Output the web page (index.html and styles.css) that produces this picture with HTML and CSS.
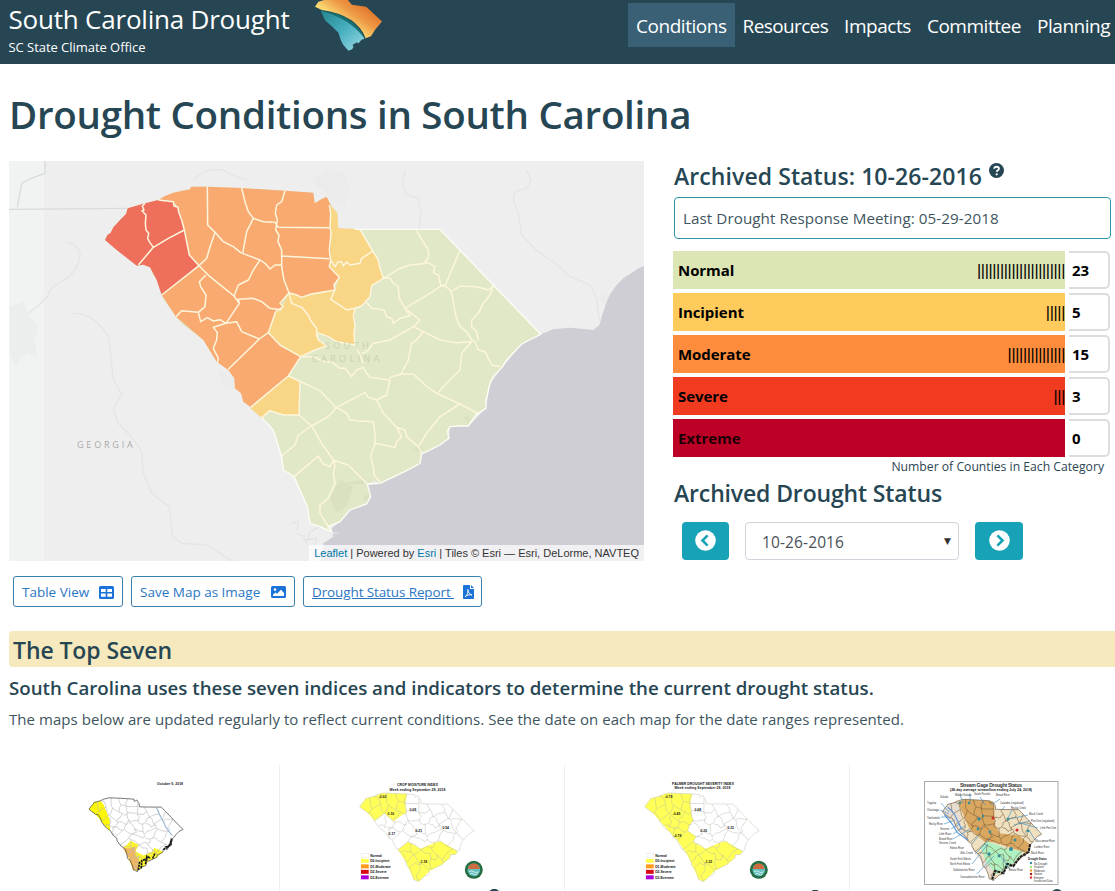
FILE: index.html
```html
<!DOCTYPE html>
<html lang="en">
<head>
<meta charset="utf-8">
<title>South Carolina Drought</title>
<link rel="stylesheet" href="styles.css">
</head>
<body>
<svg class="defs" width="0" height="0">
  <defs>
    <path id="state" d="M45 210L52 195L62 188L70 172L90 150L108 132L113 115L165 100L205 90L225 78L250 68L280 60L300 58L303 50L352 50L455 54L585 62L670 68L674 100L694 88L710 80L722 105L735 118L742 130L745 175L810 178L1050 180L1110 240L1210 348L1352 493L1295 522L1250 570L1238 590L1210 620L1200 640L1188 690L1188 715L1160 732L1150 745L1135 768L1110 768L1080 770L1072 785L1077 805L1050 825L1020 842L995 852L990 880L950 902L910 920L870 940L855 932L832 942L842 980L830 1002L780 1020L765 1040L750 1055L715 1070L720 1085L690 1070L660 1060L652 1010L635 970L612 920L592 912L580 900L575 860L565 825L550 780L540 765L515 743L482 718L482 708L460 695L453 670L435 655L433 625L415 600L380 575L365 550L340 510L300 480L275 462L258 440L240 415L225 395L215 375L206 345L200 330L188 315L180 292L160 284L140 287L125 270L80 240Z"/>
    <path id="counties" fill="none" d="M165 100L157 108L162 120L156 122L168 135L166 160L168 180L176 190L173 205L178 215L190 232M145 285L190 232L235 205L283 180M205 90L250 95L252 108L264 112L266 126L275 150L283 180L290 215L298 255L327 287L215 375M352 50L353 165L375 187L362 225L350 265L327 287M375 187L400 215L430 230L455 250M455 54L465 95L475 125L490 145L470 185L458 250M490 145L520 155L555 157L565 172M585 62L575 95L560 105L556 130L562 150L557 180L567 195L564 215L575 240L575 290L582 330L597 368M565 172L720 173M575 258L718 266M458 250L510 270L525 280L540 297L555 285L573 285M510 270L490 300L475 330L445 345L432 378M327 287L360 320L400 352L432 378L448 400L445 388L490 385L515 395L540 415L575 420M348 315L328 335L332 350L348 375L345 410L325 427M258 440L275 422L325 427L332 455L352 443L370 453L390 449L408 460M448 400L408 460L370 472L382 488L380 510L370 535L385 565L383 578M408 460L440 455L455 485L508 507M557 425L535 488L508 507L415 598M535 488L570 525L632 560L595 618L482 712M557 425L580 410L570 400L597 368L605 400L635 412L655 435L662 452L680 475L680 500M597 368L620 375L635 382L660 373L735 360L732 345L748 322L718 290L722 270M735 360L722 388L770 420L795 415M718 105L722 130L720 170L723 190L718 240L722 270L735 290L745 275L755 275L760 288L770 276L780 285L810 280L815 265L848 243M810 178L848 243L865 270L870 295L880 325L845 347L840 380L815 408L795 415L790 440L795 465L792 490L795 525L740 515L715 500L680 487L685 510L710 528L675 540L632 560M795 525L810 555L820 580M980 183L995 208L1015 240L1016 262L1005 275L1018 280L1035 290L1030 308L1045 315L1052 345L1065 348M880 325L930 295L960 285L1010 280M1110 240L1065 348L1052 348L1020 370L945 415L990 450L970 470L900 510L850 520L830 545L815 550M880 325L900 325L910 340L925 350L928 385L945 415L960 437L930 445L910 460L905 445L890 440L882 420L845 415L830 398M970 470L1000 485L1050 510L1100 518L1145 515M1065 348L1080 360L1088 380L1092 410L1098 440L1110 470L1130 485L1145 510L1155 515L1165 540L1185 545L1205 585L1232 590M1085 365L1110 348L1160 350L1195 360L1210 348L1200 375L1180 400L1165 430L1145 450L1145 470L1160 485L1165 510M1000 485L980 510L965 520L955 570L933 612M1145 515L1115 550L1110 600L1070 640L1043 670M632 560L675 560L700 575L725 575L750 595L765 595L785 620L800 600L820 592L830 610L840 622L895 630L905 620L935 612L970 612L1005 645L1040 670L1110 702L1130 712L1165 732M595 618L690 662L740 715M900 630L890 675L860 690L835 682L825 668L740 712L720 735L710 742L665 768L625 795L615 825L575 858M630 638L627 735L665 768L695 820L730 870L720 890L700 882L685 858L612 920M515 743L540 722L580 735L627 735M740 712L770 730L780 750L800 752L850 755L855 790L855 820L842 860L850 890L852 915L870 935M730 870L775 885L790 900L830 940M730 870L735 885L730 910L735 940L715 985L690 1005L690 1030L715 1070M860 690L880 730L920 772L945 780L950 800L985 830L995 852M855 820L915 832L920 815L935 800L920 772M985 830L1010 790L1050 740L1110 702"/>
    <symbol id="question" viewBox="0 0 16 16"><circle cx="8" cy="8" r="8" fill="#264653"/><path d="M5.500 6.200C5.600 4.700 6.600 4 8 4c1.500 0 2.600.8 2.600 2.100C10.600 7.800 8.300 7.800 8.200 9.500" fill="none" stroke="#fff" stroke-width="1.900"/><circle cx="8.200" cy="12" r="1.200" fill="#fff"/></symbol>
    <symbol id="legend" viewBox="0 0 40 32">
      <rect x=".5" y=".5" width="7" height="4" fill="#fff" stroke="#ddd" stroke-width=".4"/><rect y="6" width="8" height="4" fill="#ffff4d"/><rect y="11.500" width="8" height="4" fill="#ff9a1c"/><rect y="17" width="8" height="4" fill="#d90b16"/><rect y="22.500" width="8" height="4" fill="#a800d8"/>
      <g class="tiny title"><text x="9.500" y="4">Normal</text><text x="9.500" y="9.500">D0-Incipient</text><text x="9.500" y="15">D1-Moderate</text><text x="9.500" y="20.300">D2-Severe</text><text x="9.500" y="25.700">D3-Extreme</text></g>
    </symbol>
    <symbol id="seal" viewBox="0 0 20 20"><circle cx="10" cy="10" r="9.500" fill="#256d43"/><circle cx="10" cy="10" r="6.700" fill="#63bfc0"/><path d="M3.700 9Q5 3.500 10 3.400Q15 3.500 16.300 9Z" fill="#cf6b3e"/><path d="M5 12q2.500-2 5 0t5 0M6 14.500q2-2 4 0t4 0" stroke="#d8f0ea" fill="none"/></symbol>
    <linearGradient id="warm" gradientUnits="userSpaceOnUse" x1="1085" y1="10" x2="1040" y2="75"><stop offset="0" stop-color="#e0762c"/><stop offset=".5" stop-color="#ee9a45"/><stop offset="1" stop-color="#f9d872"/></linearGradient>
    <linearGradient id="cool" x1="0" y1="0" x2="1" y2="1"><stop offset="0" stop-color="#24868f"/><stop offset=".5" stop-color="#48afc0"/><stop offset="1" stop-color="#9bdce4"/></linearGradient>
  </defs>
</svg>

<header class="topbar">
  <div class="brand"><div class="brand-name">South Carolina Drought</div><div class="brand-sub">SC State Climate Office</div></div>
  <svg class="logo" viewBox="945 0 200 152" width="67" height="51">
    <path d="M962 32L975 60L995 78L1015 98L1022 120L1030 135L1045 151L1056 147L1060 140L1057 134L1070 126L1074 130L1085 118L1093 116Q1060 45 962 32Z" fill="url(#cool)"/>
    <path d="M945 20L955 5L985-4H1040L1055 14L1098 20L1145 64L1125 88L1112 108L1096 114Q1070 45 965 30Z" fill="url(#warm)"/>
    <path d="M962 32Q1065 42 1093 115Q1050 55 962 32Z" fill="#176f70"/>
  </svg>
  <nav class="nav">
    <a class="active">Conditions</a><a class="resources">Resources</a><a>Impacts</a><a>Committee</a><a>Planning</a>
  </nav>
</header>

<main>
  <h1>Drought Conditions in South Carolina</h1>
  <div class="columns">
    <section class="map-col">
      <div class="map">
        <svg viewBox="9 161 635 400" width="635" height="400">
          <rect x="9" y="161" width="635" height="400" fill="#eee"/><rect x="9" y="161" width="35" height="400" fill="#f0f3f2"/>
          <g transform="translate(90 170) scale(.33333)">
            <path d="M1662 288L1645 295L1630 305L1620 312L1600 325L1580 345L1562 370L1552 390L1542 420L1535 440L1528 465L1510 480L1490 478L1440 473L1390 478L1352 493L1295 522L1238 590L1200 640L1188 715L1135 768L1080 770L1077 805L995 852L990 880L870 940L832 945L842 980L830 1002L780 1020L750 1055L725 1075L730 1100L700 1120L690 1180H1662Z" fill="#cfced4"/>
            <g fill="none" stroke="#e5e5e6" stroke-width="4"><path d="M945 0L938 40L950 75L985 85L993 130L988 178M1310 0L1322 30L1310 55L1275 65L1270 90L1285 130L1295 195L1345 245L1390 275L1440 320L1500 345L1520 385L1525 430L1530 455"/><path d="M-70 215Q-25 230-30 260Q-40 310-85 335Q-120 350-125 375Q-150 405-185 430M-50 430Q15 430 55 500Q65 570 68 620Q85 660 95 670L70 720L85 760L125 800L155 845L160 910L185 970L238 1010L248 1100L275 1120L350 1125L430 1175M310 30Q350-10 400 0Q430 20 470 30"/></g>
            <path d="M-243 118L110 115M-218 112L-205 40Q-180 25-135 10V-30" fill="none" stroke="#d9dbdb" stroke-width="4"/>
            <g fill="#e5e5e6" opacity=".4"><path d="M-240 410L-200 395L-180 440L-155 470L-165 510L-160 560L-190 550L-225 590L-240 550ZM385 600L430 620L435 660L400 655ZM660 30L710 0L760 10L780 60L765 110L735 100L700 60ZM1525 380L1555 365L1545 410Z"/></g>
            <path d="M648 1120L660 1085L690 1070L712 1062L720 1088L745 1090M605 1060L625 1055L622 1080M640 1110L680 1105L675 1130M615 1090L645 1100" fill="none" stroke="#e4e4e6" stroke-width="4"/>
            <use href="#state" fill="#e0e8c7"/>
            <g fill="#b9c2a0" opacity=".16"><path d="M720 980L750 930L790 950L770 1010L740 1030ZM760 940L820 930L825 945ZM820 980L838 970L830 1000ZM970 835L995 830L990 850ZM1120 740L1140 735L1135 765Z"/></g>
            <path d="M720 105L742 130L745 175L810 178L848 243L865 270L880 325L845 347L840 380L815 408L795 415L792 490L795 525L740 515L680 487L685 510L710 528L675 540L632 560L570 525L535 488L557 425L575 415L597 368L635 382L735 360L748 322L718 290L720 170ZM482 715L595 618L630 638L627 735L580 735L540 722L515 743Z" fill="#f9d586"/>
            <path d="M205 90L225 78L250 68L300 58L303 50L352 50L455 54L585 62L670 68L674 100L694 88L710 80L722 105L720 170L722 270L718 290L748 322L732 345L735 360L660 373L635 382L597 368L575 400L580 412L557 425L535 488L570 525L632 560L595 618L482 712L460 695L453 670L435 655L433 625L415 600L380 575L340 510L258 440L215 375L327 287L298 255L290 215L283 180L264 112L250 95Z" fill="#f8aa70"/>
            <path d="M45 210L52 195L62 188L70 172L90 150L108 132L113 115L165 100L205 90L250 95L252 108L264 112L275 150L283 180L290 215L298 255L327 287L215 375L200 330L180 292L160 284L140 287L80 240Z" fill="#ee705c"/>
            <use href="#counties" stroke="#fdf6dc" stroke-width="4.500" stroke-linejoin="round"/>
            <path d="M795 178H1050L1352 493L1295 522L1250 570L1238 590L1210 620L1200 640L1188 690L1188 715L1160 732L1135 768L1110 768L1080 770L1072 785L1077 805L1050 825L995 852L990 880L950 902L870 940L832 942L842 980L830 1002L780 1020L750 1055L715 1070L725 1085L690 1070L660 1060L652 1010L612 920L580 900L575 860L550 780L515 743" fill="none" stroke="#fdfdf5" stroke-width="4"/>
          </g>
          <text class="map-label georgia" x="77" y="448">GEORGIA</text>
          <text class="map-label carolina" x="325" y="349">SOUTH</text><text class="map-label carolina" x="312" y="362">CAROLINA</text>
        </svg>
        <div class="attribution"><b>Leaflet</b> | Powered by <b>Esri</b> | Tiles © Esri — Esri, DeLorme, NAVTEQ</div>
      </div>
      <div class="actions">
        <a class="action table"><span>Table View</span><svg width="15" height="13" viewBox="0 0 15 13"><path fill="#1b72d8" fill-rule="evenodd" d="M1.500 0h12A1.500 1.500 0 0 1 15 1.500v10a1.500 1.500 0 0 1-1.500 1.500h-12A1.500 1.500 0 0 1 0 11.500v-10A1.500 1.500 0 0 1 1.500 0ZM2 3v3h4.700V3ZM8.300 3v3H13V3ZM2 7.500v3.300h4.700V7.500ZM8.300 7.500v3.300H13V7.500Z"/></svg></a>
        <a class="action save"><span>Save Map as Image</span><svg width="15" height="12" viewBox="0 0 15 12"><path fill="#1b72d8" fill-rule="evenodd" d="M1.500 0h12A1.500 1.500 0 0 1 15 1.500v9a1.500 1.500 0 0 1-1.500 1.500h-12A1.500 1.500 0 0 1 0 10.500v-9A1.500 1.500 0 0 1 1.500 0ZM2 10h11V7L10 3.800 6 7.700 4.500 6.400 2 8.500Z"/><circle cx="4" cy="3.600" r="1.300" fill="#fff"/></svg></a>
        <a class="action report"><span class="underline">Drought Status Report&nbsp;</span><svg width="11" height="14" viewBox="0 0 11 14"><path fill="#1b72d8" d="M1 0h6v4h4v9.200a.8.8 0 0 1-.8.800H.8A.8.8 0 0 1 0 13.200V1A1 1 0 0 1 1 0ZM8 0l3 3H8Z"/><path d="M4.800 4.500C5.500 8 7 9.500 9 10 6.500 9.400 4 10 2 11.800 4 10.500 5.500 8 4.800 4.500Z" fill="none" stroke="#fff" stroke-width=".9"/></svg></a>
      </div>
    </section>

    <section class="status">
      <h2 class="status-title">Archived Status: 10-26-2016<svg class="help" width="15" height="15"><use href="#question"/></svg></h2>
      <div class="meeting">Last Drought Response Meeting: 05-29-2018</div>
      <div class="levels">
        <div class="level"><div class="bar normal">Normal<i>|||||||||||||||||||||||</i></div><div class="count">23</div></div>
        <div class="level"><div class="bar incipient">Incipient<i>|||||</i></div><div class="count">5</div></div>
        <div class="level"><div class="bar moderate">Moderate<i>|||||||||||||||</i></div><div class="count">15</div></div>
        <div class="level"><div class="bar severe">Severe<i>|||</i></div><div class="count">3</div></div>
        <div class="level"><div class="bar extreme">Extreme</div><div class="count">0</div></div>
      </div>
      <div class="note">Number of Counties in Each Category</div>
      <h2 class="archive-title">Archived Drought Status</h2>
      <div class="picker">
        <button class="step"><svg width="21" height="21" viewBox="0 0 21 21"><circle cx="10.500" cy="10.500" r="10.300" fill="#fff"/><path d="M12.600 5.300L7.500 10.500L12.600 15.700" fill="none" stroke="#17a2b8" stroke-width="2.600"/></svg></button>
        <div class="select"><span>10-26-2016</span><b>▼</b></div>
        <button class="step next"><svg width="21" height="21" viewBox="0 0 21 21"><circle cx="10.500" cy="10.500" r="10.300" fill="#fff"/><path d="M8.400 5.300L13.500 10.500L8.400 15.700" fill="none" stroke="#17a2b8" stroke-width="2.600"/></svg></button>
      </div>
    </section>
  </div>

  <h2 class="band">The Top Seven</h2>
  <h3>South Carolina uses these seven indices and indicators to determine the current drought status.</h3>
  <p>The maps below are updated regularly to reflect current conditions. See the date on each map for the date ranges represented.</p>

  <div class="cards">
    <div class="card"><svg viewBox="0 765 279 126" width="279" height="126">
      <text class="tiny title" x="157" y="785" textLength="26">October 9, 2018</text>
      <g transform="translate(85.800 794.300) scale(.0719 .0713)">
        <path d="M45 210L113 115L205 90L250 150L330 350L340 510L258 440L215 375L140 287Z" fill="#fcf706"/>
        <path d="M515 743L560 720L620 650L700 690L740 712L690 800L800 860L930 800L950 750L1050 790L1075 805L990 880L870 940L842 980L715 1075L660 1060L575 860Z" fill="#fcf42a"/>
        <path d="M515 743L600 760L690 730L690 850L730 900L735 1060L660 1060L612 920L575 860Z" fill="#eeb765"/>
        <use href="#counties" stroke="#bbb" stroke-width="9"/><use href="#state" fill="none" stroke="#444" stroke-width="10"/>
        <path d="M980 183L1030 290L1110 450L1190 570" stroke="#80add8" stroke-width="12" fill="none"/>
        <path d="M730 1060L750 940M770 1040L780 930L860 900M830 980L850 870L900 900M930 900L960 830M1080 780L1110 740L1180 715L1195 620L1170 700L1120 770" stroke="#1a1a1a" stroke-width="24" fill="none" stroke-dasharray="34 8"/>
      </g></svg></div>
    <div class="card"><svg viewBox="284 765 281 126" width="280" height="126">
      <text class="tiny title" x="397.500" y="786" textLength="41">CROP MOISTURE INDEX</text><text class="tiny title" x="390" y="790.500" textLength="56">Week ending September 29, 2018</text>
      <g transform="translate(356 788.600) scale(.088 .086)">
        <path d="M45 210L113 115L205 90L300 50L585 62L565 172L575 290L540 297L432 378L327 287L215 375L140 287ZM482 712L595 618L740 700L900 630L970 612L1165 732L1135 768L1080 770L1077 805L990 880L842 960L720 1085L660 1060L575 860Z" fill="#ffff57"/>
        <use href="#counties" stroke="#b5b5aa" stroke-width="5"/><use href="#state" fill="none" stroke="#c7c7ba" stroke-width="6"/></g>
      <g class="tiny title"><text x="379" y="798">-0.02</text><text x="388" y="815">0.16</text><text x="410" y="811">0.69</text><text x="389" y="835">0.17</text><text x="416" y="832">0.21</text><text x="443" y="829">0.54</text><text x="420" y="863">-1.18</text></g>
      <use href="#legend" x="361" y="853" width="40" height="32"/><use href="#seal" x="465" y="860" width="19" height="20"/><use href="#question" x="489" y="889" width="12" height="12"/></svg></div>
    <div class="card"><svg viewBox="284 765 281 126" width="280" height="126">
      <text class="tiny title" x="387.500" y="784.500" textLength="62">PALMER DROUGHT SEVERITY INDEX</text><text class="tiny title" x="390" y="789" textLength="56">Week ending September 29, 2018</text>
      <g transform="translate(356 788.600) scale(.088 .086)">
        <path d="M45 210L113 115L205 90L300 50L585 62L565 172L575 290L597 368L557 425L535 488L632 560L595 618L740 700L900 630L970 612L1165 732L1135 768L1080 770L1077 805L990 880L842 960L720 1085L660 1060L575 860L515 743L415 600L215 375L140 287Z" fill="#ffff57"/>
        <use href="#counties" stroke="#b5b5aa" stroke-width="5"/><use href="#state" fill="none" stroke="#c7c7ba" stroke-width="6"/></g>
      <g class="tiny title"><text x="380" y="798">-0.79</text><text x="388" y="815">-0.45</text><text x="410" y="811">0.68</text><text x="389" y="837">-0.78</text><text x="416" y="832">0.36</text><text x="443" y="829">0.33</text><text x="420" y="863">-1.22</text></g>
      <use href="#legend" x="361" y="853" width="40" height="32"/><use href="#seal" x="465" y="860" width="19" height="20"/><use href="#question" x="525" y="890" width="12" height="12"/></svg></div>
    <div class="card"><svg viewBox="854 765 261 126" width="261" height="126">
      <rect x="924.500" y="781.500" width="133.500" height="103" fill="#fff" stroke="#aaa"/>
      <text class="tiny gage" x="960" y="787" textLength="62">Stream Gage Drought Status</text><text class="tiny title" x="950" y="791" textLength="82">(28-day average streamflow ending July 24, 2018)</text>
      <g transform="translate(938.900 795.500) scale(.076 .0785)">
        <use href="#state" fill="#efe0c0"/>
        <path d="M45 210L113 115L250 80L300 400L420 650L690 900L720 1085L575 860L215 375Z" fill="#e8ddd2"/>
        <path d="M250 80L352 50L690 70L720 105L740 380L800 480L1050 510L1200 620L1150 735L900 650L740 600L600 590L400 420Z" fill="#d9a75f"/>
        <path d="M550 650L630 590L740 620L900 680L1110 710L995 852L842 960L750 1000L620 850Z" fill="#aef0c0"/>
        <use href="#counties" stroke="#715839" stroke-width="7"/><use href="#state" fill="none" stroke="#65523c" stroke-width="8"/>
        <path d="M700 1070L740 960L850 990L900 870L980 900L1060 790L1180 720L1200 620" stroke="#222" stroke-width="28" fill="none" stroke-dasharray="40 9"/>
        <path d="M70 240L180 370L240 470L380 570M120 150L200 230L300 430" fill="none" stroke="#6199d6" stroke-width="16"/>
      </g>
      <g fill="none" stroke="#3689c4" stroke-width=".6"><path d="M941 803L949 812M940 810L949 814M941 817L949 817M944 824L955 820M951 829L960 824M953 834L965 826M953 839L970 829M960 795L963 803M970 794L970 804M980 797L985 805M1000 799L991 805M1005 806L1002 810M1012 810L1008 818M1028 815L1009 819M1030 821L1014 825M1038 828L1020 823M1035 840L1029 830M1010 870L1000 855M972 844L980 834M975 854L990 839M972 864L988 844M977 874L994 856"/></g>
      <g fill="#348d9b"><circle cx="960" cy="803" r="1.200"/><circle cx="969" cy="803" r="1.200"/><circle cx="979" cy="819" r="1.700"/><circle cx="983" cy="816" r="1.200"/><circle cx="978" cy="829" r="1.400"/><circle cx="990" cy="832" r="1.400"/><circle cx="1008" cy="819" r="1.500"/><circle cx="1028" cy="831" r="1.400"/><circle cx="1015" cy="840" r="1.500"/><circle cx="1011" cy="849" r="2"/><circle cx="989" cy="854" r="1.700"/><circle cx="999" cy="856" r="1.400"/></g><g fill="#d02b2b"><circle cx="993" cy="818" r="1.500"/><circle cx="1017" cy="830" r="1.500"/></g>
      <g class="tiny gage-label"><text x="955" y="796">Middle Saluda</text><text x="974" y="795">South Pacolet</text><text x="996" y="796">Broad River</text><text x="940" y="798">Saluda</text><text x="927" y="804">Tugaloo</text><text x="927" y="811">Chattooga</text><text x="927" y="819">Twelvemile</text><text x="929" y="825">Rocky River</text><text x="940" y="830">Stevens</text><text x="939" y="835">Little River</text><text x="939" y="840">Broad River</text><text x="939" y="844">Stevens Creek</text><text x="950" y="849">Edisto River</text><text x="960" y="854">Gills Creek</text><text x="950" y="860">South Fork Edisto</text><text x="950" y="865">North Fork Edisto</text><text x="953" y="871">Salkehatchie River</text><text x="960" y="878">Coosawhatchie River</text><text x="1000" y="804">Catawba (regulated)</text><text x="1011" y="809">Rocky Creek</text><text x="1029" y="815">Black Creek</text><text x="1031" y="822">Pee Dee (regulated)</text><text x="1040" y="829">Little Pee Dee</text><text x="1035" y="842">Waccamaw River</text><text x="1034" y="848">Lumber River</text><text x="1031" y="854">Black River</text><text x="1009" y="871">Edisto River</text></g>
      <g class="tiny gage-label"><text class="title" x="1028" y="860">Drought Status</text><text x="1034" y="864.500">No Drought</text><text x="1034" y="868">Incipient</text><text x="1034" y="871.500">Moderate</text><text x="1034" y="875">Severe</text><text x="1034" y="878.500">Extreme</text><text x="1034" y="882">Insufficient Data</text></g>
      <circle cx="1031" cy="863" r="1.200" fill="#348d9b"/><circle cx="1031" cy="867" r="1.200" fill="#9ce675"/><circle cx="1031" cy="870.500" r="1.200" fill="#f19b30"/><circle cx="1031" cy="874" r="1.200" fill="#a31616"/><circle cx="1031" cy="877.500" r="1.200" fill="#e03333"/>
      <use href="#question" x="1051" y="889" width="12" height="12"/></svg></div>
  </div>
</main>
</body>
</html>
```
FILE: styles.css
```css
* { box-sizing: border-box; }
body { margin: 0; width: 1115px; height: 891px; overflow: hidden; background: #fff; color: #2c4552; font: 16px/24px "Open Sans", "Noto Sans", sans-serif; }
.defs { display: block; height: 0; }
h1, h2, h3, p { margin: 0; white-space: nowrap; color: #264653; }
span { white-space: nowrap; }
svg { flex: none; }
.topbar { height: 64px; background: #264653; color: #fff; display: flex; align-items: flex-start; }
.brand { width: 315px; padding: 2px 0 0 8.5px; white-space: nowrap; }
.brand-name { font-size: 26px; line-height: 35px; letter-spacing: -.209px; }
.brand-sub { font-size: 13px; line-height: 20px; letter-spacing: -.043px; }
.nav { display: flex; margin: 3px 0 0 auto; width: 487px; }
.nav a { height: 44px; padding: 0 8px; font-size: 19px; line-height: 46px; letter-spacing: -.46px; white-space: nowrap; }
.nav .resources { letter-spacing: -.625px; }
.nav .active { background: #3a6076; }
main { padding-left: 9px; }
h1 { height: 97px; padding-top: 26px; font-size: 38.5px; line-height: 48px; font-weight: 600; letter-spacing: -.29px; }
.columns { display: flex; height: 470px; }
.map-col { width: 664px; }
.map { width: 635px; height: 400px; display: grid; }
.map > * { grid-area: 1 / 1; }
.map-label { font-size: 9px; fill: #aaa; letter-spacing: 2.8px; }
.carolina { fill: #c9d1b4; letter-spacing: 3.4px; }
.attribution { align-self: end; justify-self: end; background: rgba(255, 255, 255, .7); font: 11px/16px "Liberation Sans", Arial, sans-serif; color: #333; padding: 0 5px; z-index: 1; }
.attribution b { font-weight: 400; color: #0078a8; }
.actions { display: flex; gap: 8px; padding: 15px 0 0 4px; }
.action { height: 31px; border: 1px solid #3a80b0; border-radius: 3px; display: flex; align-items: center; justify-content: space-between; padding: 1px 8px 0; font-size: 13.5px; line-height: 29px; color: #2b76c4; }
.table { width: 110px; }
.save { width: 164px; }
.report { width: 179px; padding-right: 7px; }
.underline { text-decoration: underline; letter-spacing: -.115px; }
.status { width: 442px; }
h2 { font-size: 23px; line-height: 30px; font-weight: 600; display: flex; }
.status > h2 { height: 36px; padding-left: 1px; }
.status-title { letter-spacing: .086px; }
.help { margin: 2px 0 0 7px; }
.meeting { height: 42px; width: 437px; margin-left: 1px; border: 1px solid #2f95a6; border-radius: 4px; padding: 0 8px; font-size: 15.2px; line-height: 41px; letter-spacing: .07px; color: #3e5560; }
.levels { display: grid; gap: 4px; margin-top: 12px; color: #000; }
.level { display: flex; height: 38px; gap: 4px; font-size: 15px; line-height: 38px; font-weight: 700; letter-spacing: -.06px; }
.bar { width: 392px; display: flex; justify-content: space-between; padding-left: 5px; }
.bar i { font: 16px/38px "Liberation Sans", Arial, sans-serif; letter-spacing: -.33px; padding-top: 1px; }
.normal { background: #dce5b4; }
.incipient { background: #fecb5c; }
.moderate { background: #fd8d3c; }
.severe { background: #f03b20; }
.extreme { background: #bd0026; color: #1c0006; }
.count { width: 41px; border: 2px solid #ddd; border-left: 0; border-radius: 0 5px 5px 0; padding-left: 3px; line-height: 34px; font-size: 15px; }
.note { font-size: 12.2px; line-height: 20px; height: 21px; text-align: right; padding-right: 11px; }
.status .archive-title { height: 44px; letter-spacing: -.142px; }
.picker { display: flex; gap: 16px; padding-left: 9px; }
.step { width: 47px; height: 38px; border: 0; border-radius: 4px; background: #17a2b8; padding: 0 0 2px; display: grid; place-items: center; }
.next { width: 48px; }
.select { width: 214px; height: 38px; border: 1px solid #ced4da; border-radius: 4px; display: flex; justify-content: space-between; padding: 0 7px 0 16px; line-height: 39px; font-size: 15.5px; letter-spacing: .12px; color: #495057; }
.select b { font: 9px/36px "DejaVu Sans", sans-serif; color: #333; }
.band { height: 36px; background: #f6e9bd; border-radius: 4px 0 0 4px; padding-left: 4px; line-height: 39px; letter-spacing: -.093px; }
h3 { height: 42px; font-size: 18.7px; line-height: 42px; font-weight: 600; letter-spacing: -.01px; }
p { height: 56px; font-size: 15px; line-height: 20px; letter-spacing: .051px; color: #3e5560; }
.cards { display: flex; margin-left: -9px; height: 126px; }
.card { width: 285px; overflow: hidden; border-right: 1px solid #eee; flex: none; }
.card:first-child { width: 280px; }
.card:nth-child(n+2) { padding-left: 4px; }
.card svg { display: block; }
.tiny { font: 3.4px "Liberation Sans", Arial, sans-serif; fill: #333; }
.title { font-weight: 700; fill: #111; }
.gage { font-size: 5px; font-weight: 700; }
.gage-label { font-size: 2.6px; }
```
